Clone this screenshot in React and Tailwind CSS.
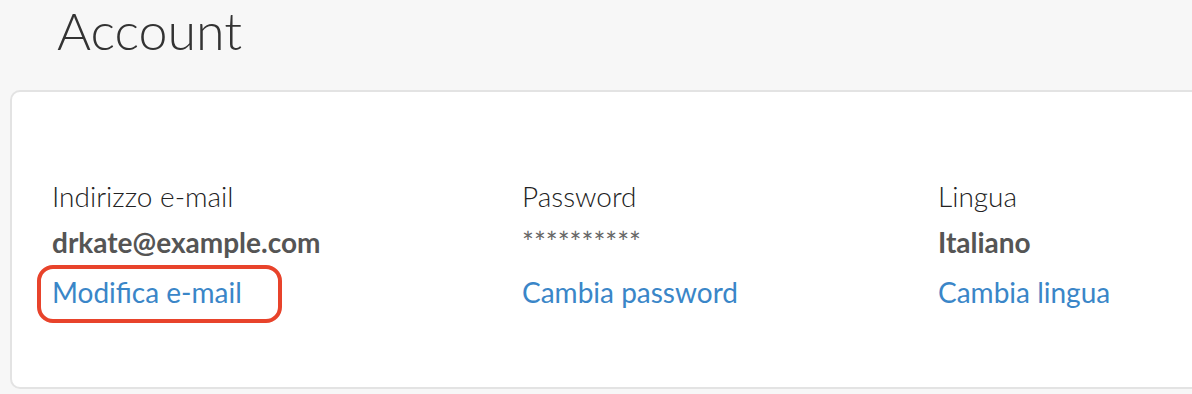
export default function App() {
  const font = { fontFamily: "Lato, 'Noto Sans', sans-serif" };
  return (
    <div className="w-[1192px] h-[394px] overflow-hidden bg-[#f7f7f7]" style={font}>
      <h1 className="pl-[57px] h-[90px] text-[52px] leading-[60px] font-light text-[#333]">Account</h1>
      <div className="ml-[10px] w-[1200px] h-[299px] bg-white border-2 border-[#e3e3e3] rounded-[10px] pl-[40px] pt-[87px]">
        <div className="flex">
          <Col w="w-[470px]" label="Indirizzo e-mail" value="drkate@example.com" link="Modifica e-mail" highlight />
          <Col w="w-[416px]" label="Password" value="**********" link="Cambia password" light />
          <Col w="w-[250px]" label="Lingua" value="Italiano" link="Cambia lingua" />
        </div>
      </div>
    </div>
  );
}

function Col({ w, label, value, link, highlight, light }) {
  return (
    <div className={`${w} flex flex-col`}>
      <div className="text-[28px] leading-[34px] font-light text-[#222]">{label}</div>
      <div className={light ? "mt-[12px] text-[28px] leading-[34px] font-normal text-[#666]" : "mt-[12px] text-[28px] leading-[34px] font-bold text-[#555]"}>{value}</div>
      <div className="relative mt-[16px]">
        <span className="text-[28px] leading-[34px] text-[#3a86c8]">{link}</span>
        {highlight && (
          <div className="absolute left-[-15px] top-[-10px] w-[245px] h-[58px] border-[4px] border-[#e8432b] rounded-[16px]" />
        )}
      </div>
    </div>
  );
}
